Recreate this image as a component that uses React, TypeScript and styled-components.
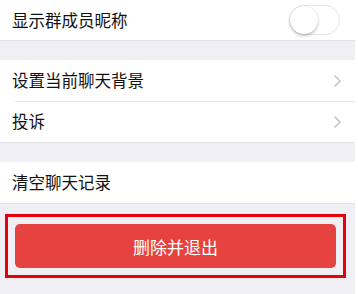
import React from 'react'
import { styled, createGlobalStyle } from 'styled-components'

const GlobalStyle = createGlobalStyle`
  html, body {
    margin: 0;
    padding: 0;
    background: #ffffff;
  }
  body {
    font-family: "Noto Sans CJK SC", "Noto Sans", sans-serif;
    -webkit-font-smoothing: antialiased;
  }
`

const Page = styled.div`
  width: 355px;
  min-height: 294px;
  background: #efeff4;
`

const Group = styled.div<{ $gap?: number }>`
  background: #ffffff;
  margin-top: ${(p) => p.$gap ?? 0}px;
  border-bottom: 1px solid #e3e3e8;
`

const Cell = styled.div<{ $h?: number; $divider?: boolean }>`
  position: relative;
  display: flex;
  align-items: center;
  justify-content: space-between;
  height: ${(p) => p.$h ?? 41}px;
  padding: 0 13px 0 12px;
  box-sizing: border-box;

  ${(p) =>
    p.$divider &&
    `
    &::before {
      content: '';
      position: absolute;
      top: 0;
      left: 15px;
      right: 0;
      height: 1px;
      background: #e5e5ea;
    }
  `}
`

const Label = styled.span`
  font-size: 16.5px;
  color: #111111;
  line-height: 1;
`

const Switch = styled.div`
  position: relative;
  width: 49px;
  height: 28px;
  border-radius: 15px;
  border: 1.5px solid #e6e6e6;
  background: #ffffff;
  margin-right: 2px;
`

const Knob = styled.div`
  position: absolute;
  top: 0;
  left: 0;
  width: 28px;
  height: 28px;
  border-radius: 50%;
  background: #ffffff;
  box-shadow: 0 2px 3px rgba(0, 0, 0, 0.22), 0 0 1px rgba(0, 0, 0, 0.2);
`

const Chevron = () => (
  <svg width="9" height="14" viewBox="0 0 9 14">
    <path d="M1.5 1.5 L7 7 L1.5 12.5" fill="none" stroke="#c4c4c9" strokeWidth="1.6" />
  </svg>
)

const Footer = styled.div`
  padding: 10px 0 16px 5px;
`

const Highlight = styled.div`
  width: 341px;
  box-sizing: border-box;
  border: 3px solid #e8000b;
  padding: 7px;
`

const DangerButton = styled.button`
  display: flex;
  align-items: center;
  justify-content: center;
  width: 100%;
  height: 44px;
  border: none;
  border-radius: 5px;
  background: #e64340;
  color: #ffffff;
  font-family: "Noto Sans CJK SC", "Noto Sans", sans-serif;
  font-size: 17px;
  padding: 0;
`

export default function App() {
  return (
    <>
      <GlobalStyle />
      <Page>
        <Group>
          <Cell $h={40}>
            <Label>显示群成员昵称</Label>
            <Switch>
              <Knob />
            </Switch>
          </Cell>
        </Group>
        <Group $gap={19}>
          <Cell>
            <Label>设置当前聊天背景</Label>
            <Chevron />
          </Cell>
          <Cell $divider>
            <Label>投诉</Label>
            <Chevron />
          </Cell>
        </Group>
        <Group $gap={19}>
          <Cell $h={41}>
            <Label>清空聊天记录</Label>
          </Cell>
        </Group>
        <Footer>
          <Highlight>
            <DangerButton>删除并退出</DangerButton>
          </Highlight>
        </Footer>
      </Page>
    </>
  )
}
